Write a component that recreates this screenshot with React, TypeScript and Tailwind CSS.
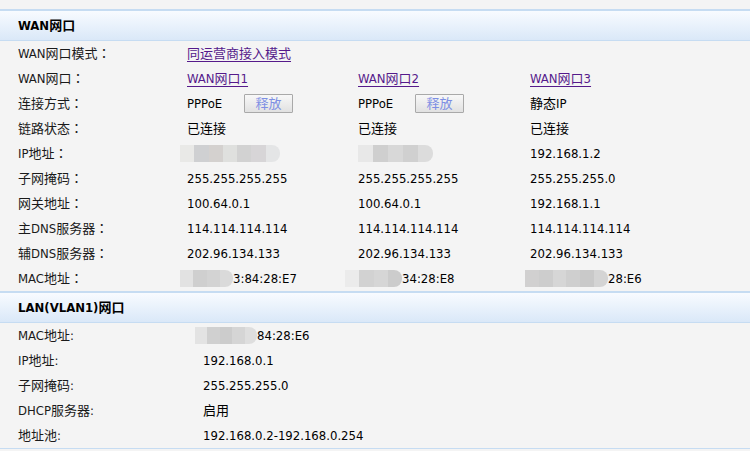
import React from 'react';

const FONT = '"DejaVu Sans Condensed", "Liberation Sans", "Noto Sans CJK SC", sans-serif';

// 打码的灰色马赛克块
const Mosaic: React.FC<{ shades: string[]; width: number }> = ({ shades, width }) => (
    <span className="inline-flex h-[17px] align-middle overflow-hidden rounded-r-[8px] blur-[0.6px]" style={{ width }}>
        {shades.map((c, i) => (
            <span key={i} className="h-full flex-1" style={{ backgroundColor: c }} />
        ))}
    </span>
);

const Header: React.FC<{ title: string }> = ({ title }) => (
    <div className="h-[32px] border-t-2 border-b border-[#c6dcf2] bg-gradient-to-b from-[#f8fbff] to-[#dae8f8] flex items-center pl-[18px]">
        <span className="text-[13px] font-bold text-black">{title}</span>
    </div>
);

// 全角冒号居中显示
const Label: React.FC<{ text: string }> = ({ text }) => {
    if (text.endsWith('：')) {
        return (
            <span className="text-[#1a1a1a]">
                {text.slice(0, -1)}
                <span className="font-['Noto_Sans_CJK_TC',sans-serif]">：</span>
            </span>
        );
    }
    return <span className="text-[#1a1a1a]">{text}</span>;
};

const ReleaseButton = () => (
    <button className="w-[49px] h-[19px] border border-[#a9a9a9] bg-gradient-to-b from-[#f8f8f8] to-[#e1e1e1] text-[13px] leading-none text-[#7d8fe4] rounded-[1px]">
        释放
    </button>
);

const Link: React.FC<{ children: React.ReactNode }> = ({ children }) => (
    <a href="#" className="text-[#551a8b] underline underline-offset-[3px]">{children}</a>
);

type Cell = React.ReactNode;

const wanRows: [string, Cell, Cell, Cell][] = [
    ['WAN网口：', <Link>WAN网口1</Link>, <Link>WAN网口2</Link>, <Link>WAN网口3</Link>],
    [
        '连接方式：',
        <span className="flex items-center"><span className="w-[57px]">PPPoE</span><ReleaseButton /></span>,
        <span className="flex items-center"><span className="w-[57px]">PPPoE</span><ReleaseButton /></span>,
        '静态IP',
    ],
    ['链路状态：', '已连接', '已连接', '已连接'],
    [
        'IP地址：',
        <span className="-ml-[7px] flex"><Mosaic width={100} shades={['#e9e9e7', '#cfd0d2', '#d4d1cf', '#dfe0de', '#d2d2d2', '#d7d5d7', '#e4e5e6']} /></span>,
        <span className="flex"><Mosaic width={75} shades={['#e8e8e8', '#cfcfcf', '#d8d8d8', '#d0d0d0', '#dcdcdc']} /></span>,
        '192.168.1.2',
    ],
    ['子网掩码：', '255.255.255.255', '255.255.255.255', '255.255.255.0'],
    ['网关地址：', '100.64.0.1', '100.64.0.1', '192.168.1.1'],
    ['主DNS服务器：', '114.114.114.114', '114.114.114.114', '114.114.114.114'],
    ['辅DNS服务器：', '202.96.134.133', '202.96.134.133', '202.96.134.133'],
    [
        'MAC地址：',
        <span className="-ml-[7px] flex items-center"><Mosaic width={53} shades={['#e2e2e2', '#cfcfcf', '#d3d3d3', '#dadada']} /><span>3:84:28:E7</span></span>,
        <span className="-ml-[13px] flex items-center"><Mosaic width={57} shades={['#ebebeb', '#d2d2d2', '#d6d6d6', '#cccccc']} /><span>34:28:E8</span></span>,
        <span className="-ml-[5px] flex items-center"><Mosaic width={83} shades={['#d1d0d0', '#cdcdcd', '#d6d6d6', '#cfcfcf', '#c9c9c9', '#d4d4d4']} /><span>28:E6</span></span>,
    ],
];

const lanRows: [string, Cell][] = [
    ['MAC地址:', <span className="-ml-[8px] flex items-center"><Mosaic width={62} shades={['#e3e3e3', '#d0d0d0', '#cccccc', '#d5d5d5', '#dedede']} /><span>84:28:E6</span></span>],
    ['IP地址:', '192.168.0.1'],
    ['子网掩码:', '255.255.255.0'],
    ['DHCP服务器:', '启用'],
    ['地址池:', '192.168.0.2-192.168.0.254'],
];

export default function App() {
    return (
        <div className="w-[750px] h-[451px] overflow-hidden bg-[#f4f4f4] pt-[9px] text-[13px] text-black" style={{ fontFamily: FONT }}>
            <Header title="WAN网口" />
            <div className="grid grid-cols-[169px_171px_172px_1fr] pl-[18px] auto-rows-[25px] items-center">
                <Label text="WAN网口模式：" />
                <span className="col-span-3"><Link>同运营商接入模式</Link></span>
                {wanRows.map(([label, a, b, c]) => (
                    <React.Fragment key={label}>
                        <Label text={label} />
                        <span>{a}</span>
                        <span>{b}</span>
                        <span>{c}</span>
                    </React.Fragment>
                ))}
            </div>
            <Header title="LAN(VLAN1)网口" />
            <div className="grid grid-cols-[185px_1fr] pl-[18px] auto-rows-[25px] items-center border-b border-[#c6dcf2]">
                {lanRows.map(([label, v]) => (
                    <React.Fragment key={label}>
                        <Label text={label} />
                        <span>{v}</span>
                    </React.Fragment>
                ))}
            </div>
        </div>
    );
}
